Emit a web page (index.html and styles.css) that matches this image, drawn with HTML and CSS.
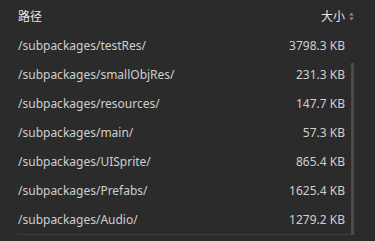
FILE: index.html
```html
<!DOCTYPE html>
<html lang="zh-CN">
<head>
    <meta charset="UTF-8">
    <meta name="viewport" content="width=device-width, initial-scale=1.0">
    <title>分包大小</title>
    <link rel="stylesheet" href="styles.css">
</head>
<body>
    <div class="table">
        <div class="row head">
            <span class="path">路径</span>
            <span class="size">大小<svg class="sort" width="5" height="9" viewBox="0 0 5 9"><path d="M2.5 0.5 L4.8 3.5 H0.2 Z M2.5 8.5 L4.8 5.5 H0.2 Z" fill="#8a8a8a"/></svg></span>
        </div>
        <div class="body">
            <div class="row"><span class="path">/subpackages/testRes/</span><span class="size">3798.3 KB</span></div>
            <div class="row"><span class="path">/subpackages/smallObjRes/</span><span class="size">231.3 KB</span></div>
            <div class="row"><span class="path">/subpackages/resources/</span><span class="size">147.7 KB</span></div>
            <div class="row"><span class="path">/subpackages/main/</span><span class="size">57.3 KB</span></div>
            <div class="row"><span class="path">/subpackages/UISprite/</span><span class="size">865.4 KB</span></div>
            <div class="row"><span class="path">/subpackages/Prefabs/</span><span class="size">1625.4 KB</span></div>
            <div class="row"><span class="path">/subpackages/Audio/</span><span class="size">1279.2 KB</span></div>
            <div class="scrollbar"></div>
        </div>
    </div>
</body>
</html>
```

FILE: styles.css
```css
/* 暗色背景 */
body {
    margin: 0;
    background: #2b2b2b;
    font-family: "Noto Sans", "Noto Sans CJK SC", sans-serif;
    font-size: 12px;
    color: #cfcfcf;
}

.table {
    width: 337px;
    margin-left: 18px;
}

.row {
    display: flex;
    justify-content: space-between;
    align-items: center;
    height: 29px;
    padding-right: 10px;
}

.head {
    height: 31px;
    color: #e6e6e6;
}

.head .size {
    display: flex;
    align-items: center;
    position: relative;
}

.sort {
    position: absolute;
    left: calc(100% + 4px);
    top: 50%;
    margin-top: -4px;
}

.body {
    position: relative;
    border-bottom: 1px solid #3d3d3d;
}

/* 滚动条 */
.scrollbar {
    position: absolute;
    right: 1px;
    bottom: -1px;
    width: 3px;
    height: 172px;
    background: #4a4a4a;
}
```
